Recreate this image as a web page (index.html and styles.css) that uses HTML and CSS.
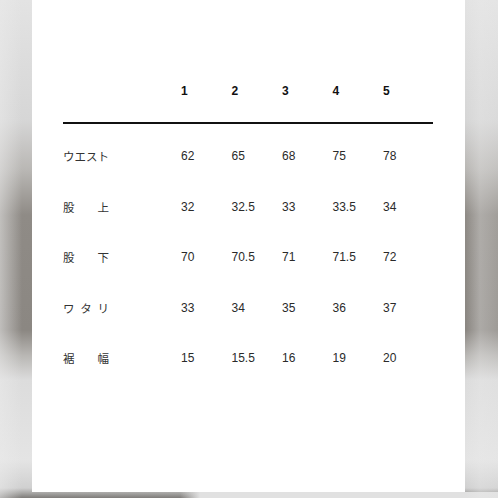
FILE: index.html
```html
<!DOCTYPE html>
<html lang="ja">
<head>
<meta charset="utf-8">
<link rel="stylesheet" href="styles.css">
</head>
<body>
<div class="backdrop">
  <div class="card">
    <div class="size-table">
      <div class="row head">
        <div class="cell label"></div>
        <div class="cell">1</div>
        <div class="cell">2</div>
        <div class="cell">3</div>
        <div class="cell">4</div>
        <div class="cell">5</div>
      </div>
      <div class="row">
        <div class="cell label">ウエスト</div>
        <div class="cell">62</div>
        <div class="cell">65</div>
        <div class="cell">68</div>
        <div class="cell">75</div>
        <div class="cell">78</div>
      </div>
      <div class="row">
        <div class="cell label">股上</div>
        <div class="cell">32</div>
        <div class="cell">32.5</div>
        <div class="cell">33</div>
        <div class="cell">33.5</div>
        <div class="cell">34</div>
      </div>
      <div class="row">
        <div class="cell label">股下</div>
        <div class="cell">70</div>
        <div class="cell">70.5</div>
        <div class="cell">71</div>
        <div class="cell">71.5</div>
        <div class="cell">72</div>
      </div>
      <div class="row">
        <div class="cell label">ワタリ</div>
        <div class="cell">33</div>
        <div class="cell">34</div>
        <div class="cell">35</div>
        <div class="cell">36</div>
        <div class="cell">37</div>
      </div>
      <div class="row">
        <div class="cell label">裾幅</div>
        <div class="cell">15</div>
        <div class="cell">15.5</div>
        <div class="cell">16</div>
        <div class="cell">19</div>
        <div class="cell">20</div>
      </div>
    </div>
  </div>
</div>
</body>
</html>
```
FILE: styles.css
```css
html, body {
  margin: 0;
  padding: 0;
}
body {
  width: 498px;
  height: 498px;
  overflow: hidden;
  font-family: "Liberation Sans", "Noto Sans CJK JP", sans-serif;
}
.backdrop {
  width: 498px;
  height: 498px;
  box-sizing: border-box;
  padding: 0 33px 6px 32px;
  background:
    linear-gradient(90deg, rgba(235,235,235,0.55) 0px, rgba(235,235,235,0) 22px, rgba(0,0,0,0) 466px, rgba(235,235,235,0.35) 480px, rgba(235,235,235,0.2) 498px),
    linear-gradient(90deg, rgba(0,0,0,0) 0px, rgba(0,0,0,0) 180px, rgba(225,225,225,1) 200px, rgba(225,225,225,1) 498px) bottom / 100% 6px no-repeat,
    linear-gradient(180deg, #e3e3e3 0px, #d6d6d6 120px, #b9b7b4 170px, #8f8b86 215px, #8b8782 330px, #b8b6b3 355px, #dcdcdc 380px, #e4e4e4 460px, #d0d0d0 488px, #7e7c79 498px);
}
.card {
  background: #ffffff;
  height: 492px;
  box-sizing: border-box;
  padding: 83px 32px 0 31px;
}
.size-table {
  display: flex;
  flex-direction: column;
}
.row {
  display: grid;
  grid-template-columns: 118px repeat(5, 50.5px);
  height: 50.5px;
  align-items: center;
  font-size: 12px;
  color: #2a2a2a;
}
.row.head {
  height: auto;
  align-items: start;
  padding-bottom: 23px;
  border-bottom: 2px solid #111;
  margin-bottom: 6.75px;
  font-weight: bold;
  color: #111;
}
.cell {
  line-height: 16px;
  white-space: nowrap;
}
.label {
  width: 46px;
  font-size: 11.5px;
  font-family: "Noto Sans CJK JP", sans-serif;
  text-align: justify;
  text-align-last: justify;
  text-justify: inter-character;
  color: #333;
}
```
